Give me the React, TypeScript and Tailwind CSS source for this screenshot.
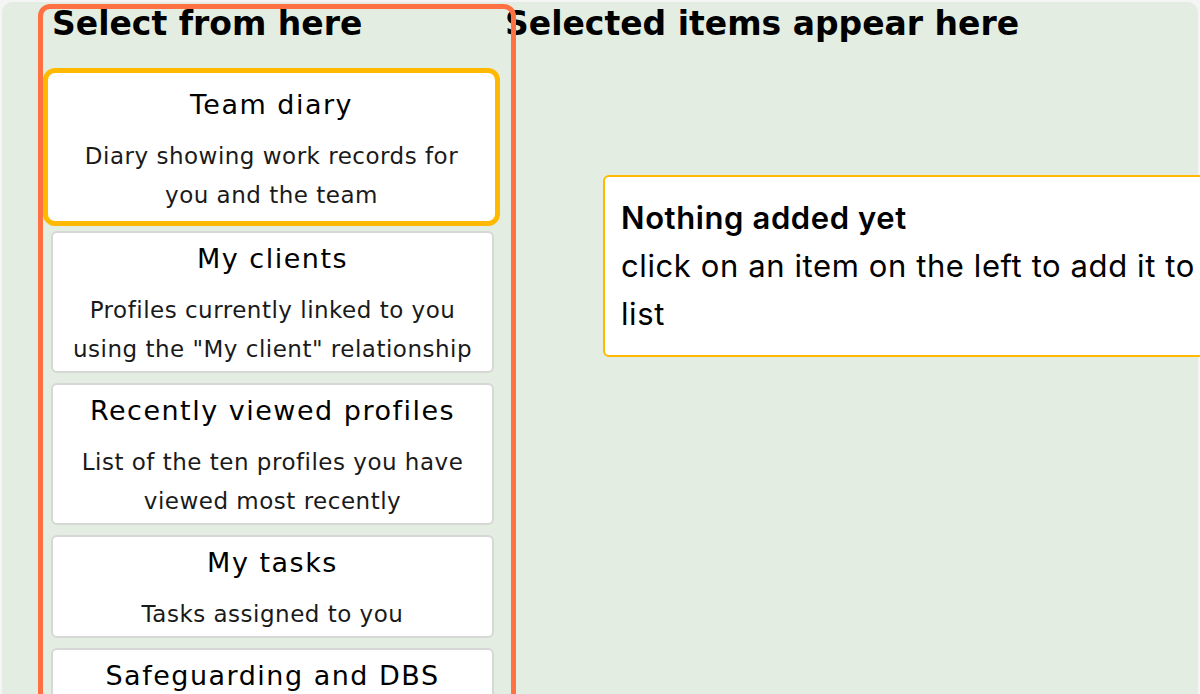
import React from 'react';

const items = [
  { title: 'Team diary', desc: ['Diary showing work records for', 'you and the team'] },
  { title: 'My clients', desc: ['Profiles currently linked to you', 'using the "My client" relationship'] },
  { title: 'Recently viewed profiles', desc: ['List of the ten profiles you have', 'viewed most recently'] },
  { title: 'My tasks', desc: ['Tasks assigned to you'] },
  { title: 'Safeguarding and DBS', desc: ['Safeguarding concerns and DBS checks'] },
];

const headFont = "font-['DejaVu_Sans',sans-serif]";
const cardFont = "font-['DejaVu_Sans',sans-serif]";

const App: React.FC = () => {
  return (
    <div className="h-[694px] w-[1200px] overflow-hidden bg-[#f4f5f4] px-[2px] pt-[2px]">
      <div className="flex h-[700px] rounded-t-[10px] bg-[#e4ede2]">
        {/* Left column */}
        <div className="relative z-10 ml-[36px] mt-[2px] h-[760px] w-[478px] shrink-0 rounded-[12px] border-[5px] border-[#ff7043]">
          <h2 className={`${headFont} -mt-[2px] pl-[9px] text-[33px] font-bold leading-[33px] text-black`}>
            Select from here
          </h2>

          <div className="mt-[28px] flex flex-col pl-[8px] pr-[17px]">
            {items.map((item, i) => (
              <div
                key={i}
                className={
                  i === 0
                    ? `${cardFont} -ml-[8px] -mr-[6px] rounded-[12px] border-[5px] border-[#ffb900] bg-white pb-[6px] pt-[12px] text-center text-black`
                    : `${cardFont} ${i === 1 ? 'mt-[5px]' : 'mt-[10px]'} rounded-[6px] border-2 border-[#d6d8d6] bg-white pb-[2px] pt-[6px] text-center text-black`
                }
              >
                <div className="text-[27px] leading-[40px] tracking-[1.5px]">{item.title}</div>
                <div className="mt-[12px] text-[23px] leading-[39px] tracking-[0.5px] text-[#1a1a1a]">
                  {item.desc.map((d, j) => (
                    <div key={j} className="whitespace-nowrap">{d}</div>
                  ))}
                </div>
              </div>
            ))}
          </div>
        </div>

        {/* Right column */}
        <div className="flex-1">
          <h2 className={`${headFont} -ml-[11px] mt-[5px] text-[33px] font-bold leading-[33px] text-black`}>
            Selected items appear here
          </h2>
          <div className="ml-[87px] mt-[135px] w-[720px] rounded-[6px] border-2 border-[#ffb900] bg-white px-4 py-[17px] font-['Inter',sans-serif] text-[31px] leading-[48px] tracking-[0.6px] text-black">
            <div className="font-semibold">Nothing added yet</div>
            <div>click on an item on the left to add it to your</div>
            <div>list</div>
          </div>
        </div>
      </div>
    </div>
  );
};

export default App;
